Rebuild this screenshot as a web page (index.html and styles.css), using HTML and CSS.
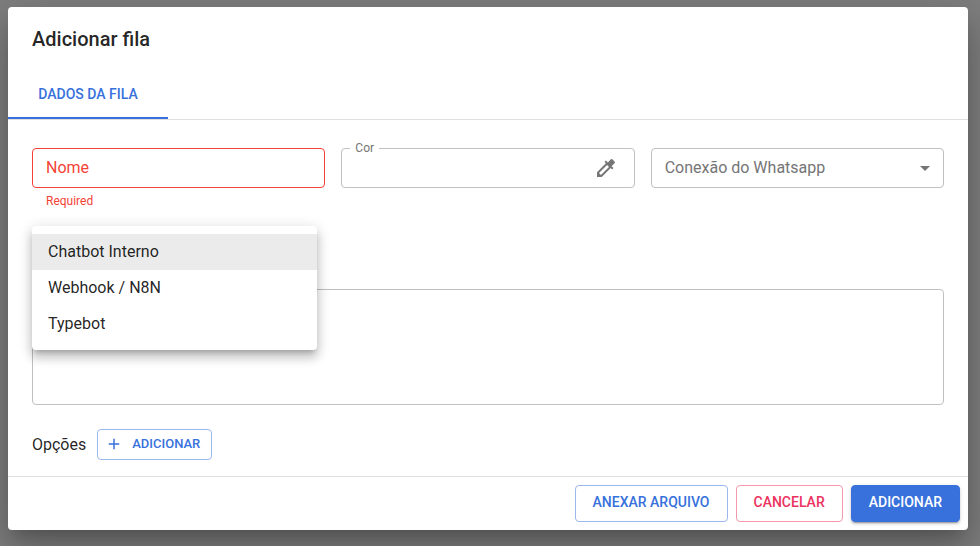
FILE: index.html
```html
<!DOCTYPE html>
<html lang="pt-BR">
<head>
    <meta charset="UTF-8">
    <meta name="viewport" content="width=device-width, initial-scale=1.0">
    <title>Adicionar fila</title>
    <link rel="stylesheet" href="styles.css">
</head>
<body>
    <form class="dialog">
        <h2 class="dialog-title">Adicionar fila</h2>

        <div class="tabs" role="tablist">
            <button type="button" class="tab active" role="tab" aria-selected="true">DADOS DA FILA</button>
        </div>

        <div class="dialog-content">
            <div class="fields">
                <div class="field error">
                    <input type="text" id="nome" class="input" aria-describedby="nomeError">
                    <label for="nome" class="label">Nome</label>
                    <p class="helper" id="nomeError">Required</p>
                </div>
                <div class="field">
                    <input type="text" id="cor" class="input">
                    <label for="cor" class="label shrink">Cor</label>
                    <button type="button" class="icon-button" aria-label="Cor">
                        <svg viewBox="0 0 24 24"><path d="M20.71 5.63l-2.34-2.34a.996.996 0 0 0-1.41 0l-3.12 3.12-1.93-1.91-1.41 1.41 1.42 1.42L3 16.25V21h4.75l8.92-8.92 1.42 1.42 1.41-1.41-1.92-1.92 3.12-3.12c.4-.4.4-1.03.01-1.42zM6.92 19L5 17.08l8.06-8.06 1.92 1.92L6.92 19z"/></svg>
                    </button>
                </div>
                <div class="field">
                    <select id="whatsapp" class="input select" aria-label="Conexão do Whatsapp">
                        <option>Conexão do Whatsapp</option>
                    </select>
                    <svg class="arrow" viewBox="0 0 24 24"><path d="M7 10l5 5 5-5z"/></svg>
                </div>
            </div>

            <!-- Tipo de integração -->
            <div class="menu-anchor">
                <div class="menu" role="listbox" aria-label="Tipo">
                    <button type="button" class="menu-item selected" role="option" aria-selected="true">Chatbot Interno</button>
                    <button type="button" class="menu-item" role="option">Webhook / N8N</button>
                    <button type="button" class="menu-item" role="option">Typebot</button>
                </div>
            </div>

            <textarea class="message" rows="5" aria-label="Mensagem"></textarea>

            <div class="options">
                <span>Opções</span>
                <button type="button" class="btn btn-small btn-primary">
                    <svg viewBox="0 0 24 24"><path d="M19 13h-6v6h-2v-6H5v-2h6V5h2v6h6v2z"/></svg>
                    ADICIONAR
                </button>
            </div>
        </div>

        <div class="dialog-actions">
            <button type="button" class="btn btn-primary">ANEXAR ARQUIVO</button>
            <button type="button" class="btn btn-secondary">CANCELAR</button>
            <button type="submit" class="btn btn-contained">ADICIONAR</button>
        </div>
    </form>
</body>
</html>
```
FILE: styles.css
```css
* {
    margin: 0;
    padding: 0;
    box-sizing: border-box;
    font-family: Roboto, sans-serif;
}

body {
    display: flex;
    align-items: flex-start;
    min-height: 100vh;
    padding: 7px 12px 16px 8px;
    background-color: #7f7f7f;
    color: rgba(0, 0, 0, 0.87);
    font-size: 16px;
    line-height: 24px;
    overflow: hidden;
}

button {
    border: none;
    background: none;
    cursor: pointer;
}

/* Dialog */
.dialog {
    flex: 1;
    background-color: #fff;
    border-radius: 4px;
    box-shadow: 0 11px 15px -7px rgba(0, 0, 0, 0.2), 0 24px 38px 3px rgba(0, 0, 0, 0.14), 0 9px 46px 8px rgba(0, 0, 0, 0.12);
}

.dialog-title {
    padding: 16px 24px;
    font-size: 20px;
    font-weight: 500;
    line-height: 32px;
}

.dialog-content {
    padding: 28px 24px 16px;
}

.dialog-actions {
    display: flex;
    justify-content: flex-end;
    gap: 8px;
    padding: 8px;
    border-top: 1px solid #e0e0e0;
}

/* Tabs */
.tabs {
    display: flex;
    border-bottom: 1px solid #e0e0e0;
}

.tab {
    min-width: 160px;
    height: 48px;
    padding: 0 12px;
    font-size: 14px;
    font-weight: 500;
}

.tab.active {
    color: #3871dc;
    border-bottom: 2px solid #3871dc;
}

/* Fields */
.fields {
    display: grid;
    grid-template-columns: repeat(3, 1fr);
    gap: 16px;
}

.field {
    position: relative;
}

.input {
    display: block;
    width: 100%;
    height: 40px;
    padding: 0 13px;
    border: 1px solid #c0c0c0;
    border-radius: 4px;
    background-color: #fff;
    font-size: 16px;
}

.select {
    appearance: none;
    padding-bottom: 2px;
    color: #757575;
}

.label {
    position: absolute;
    top: 8px;
    left: 14px;
    color: #757575;
}

.label.shrink {
    top: -8px;
    left: 9px;
    padding: 0 5px;
    background-color: #fff;
    font-size: 12px;
    line-height: 16px;
}

.helper {
    margin: 4px 14px 0;
    font-size: 12px;
    line-height: 18px;
}

.error .input {
    border-color: #f44336;
}

.error .label,
.error .helper {
    color: #f44336;
}

.icon-button {
    position: absolute;
    top: 8px;
    right: 17px;
    width: 24px;
    height: 24px;
}

.icon-button svg,
.arrow {
    display: block;
    width: 24px;
    height: 24px;
    fill: #757575;
}

.arrow {
    position: absolute;
    top: 8px;
    right: 7px;
    pointer-events: none;
}

/* Menu */
.menu-anchor {
    position: relative;
    height: 48px;
    margin: 16px 0 15px;
}

.menu {
    position: absolute;
    top: 0;
    left: 0;
    width: 285px;
    padding: 8px 0;
    background-color: #fff;
    border-radius: 4px;
    box-shadow: 0 5px 5px -3px rgba(0, 0, 0, 0.2), 0 8px 10px 1px rgba(0, 0, 0, 0.14), 0 3px 14px 2px rgba(0, 0, 0, 0.12);
}

.menu-item {
    display: block;
    width: 100%;
    padding: 6px 16px;
    color: rgba(0, 0, 0, 0.87);
    font-size: 16px;
    line-height: 24px;
    text-align: left;
}

.menu-item.selected {
    background-color: #ebebeb;
}

.message {
    display: block;
    width: 100%;
    height: 116px;
    padding: 10px 13px;
    border: 1px solid #c0c0c0;
    border-radius: 4px;
    font-size: 16px;
    resize: none;
}

.options {
    display: flex;
    align-items: center;
    gap: 11px;
    margin-top: 24px;
}

/* Buttons */
.btn {
    padding: 5px 17px 7px;
    border: 1px solid;
    border-radius: 4px;
    font-size: 14px;
    font-weight: 500;
    line-height: 23px;
}

.btn-primary {
    color: #3871dc;
    border-color: #9bb8ed;
}

.btn-secondary {
    color: #ec3360;
    border-color: #f598af;
}

.btn-contained {
    color: #fff;
    background-color: #3871dc;
    border-color: #3871dc;
    box-shadow: 0 3px 1px -2px rgba(0, 0, 0, 0.2), 0 2px 2px 0 rgba(0, 0, 0, 0.14), 0 1px 5px 0 rgba(0, 0, 0, 0.12);
}

.btn-small {
    display: flex;
    align-items: center;
    gap: 9px;
    padding: 3px 11px 4px 7px;
    font-size: 13px;
    line-height: 22px;
}

.btn-small svg {
    width: 18px;
    height: 18px;
    fill: #3871dc;
}
```
